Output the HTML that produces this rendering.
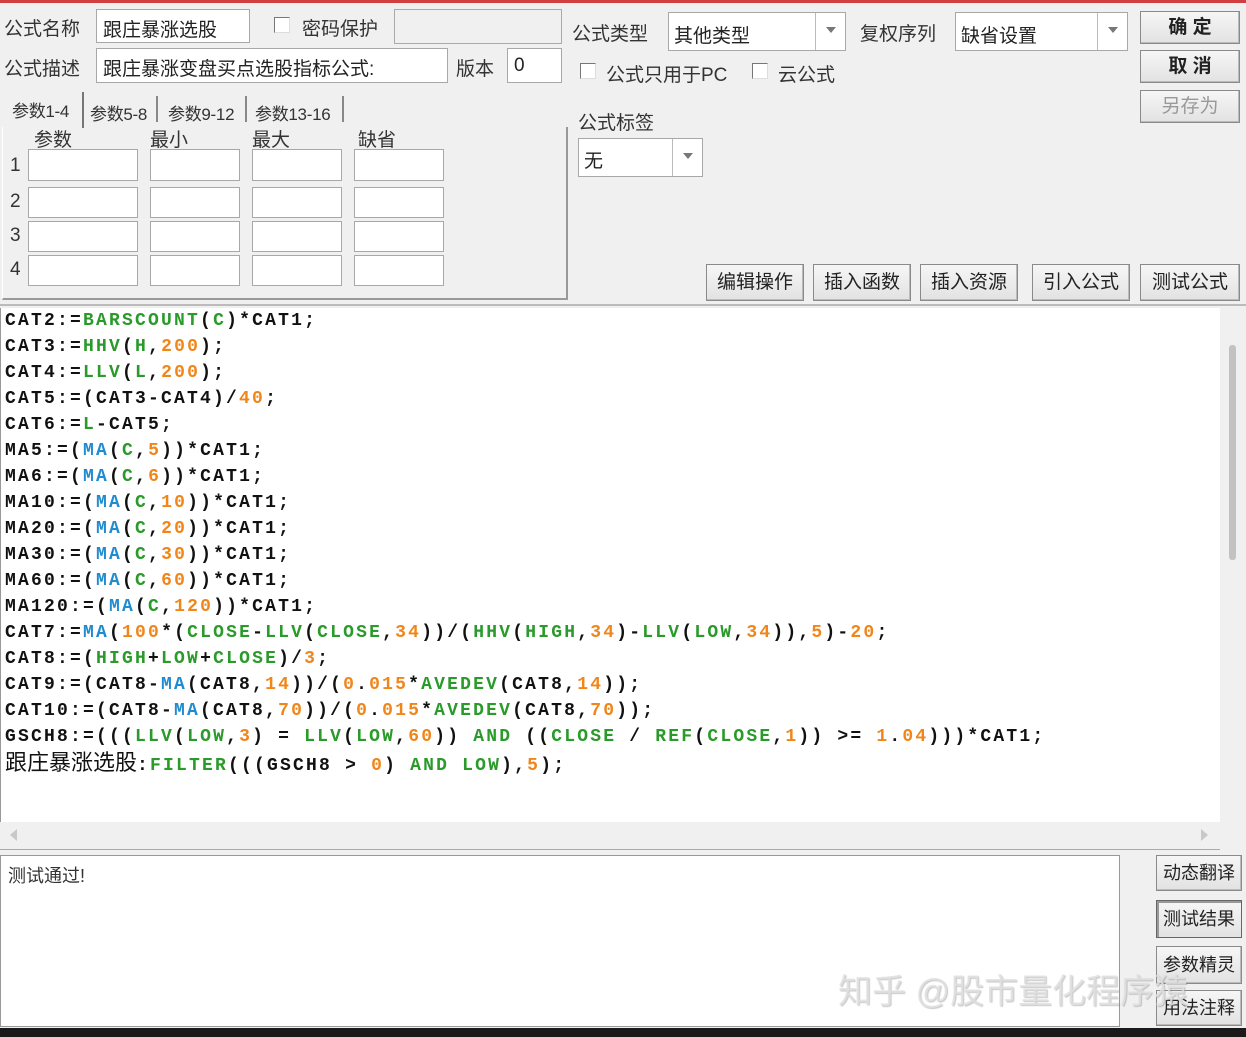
<!DOCTYPE html>
<html><head><meta charset="utf-8"><style>
*{box-sizing:border-box;margin:0;padding:0}
body{width:1246px;height:1037px;background:#f0f0f0;position:relative;overflow:hidden;font-family:"Liberation Sans","Noto Sans CJK SC",sans-serif;font-size:18px;color:#222}
.a{position:absolute}
.box{position:absolute;background:#fff;border:1px solid #a8a8a8}
.lbl{position:absolute;font-size:19px;color:#333;white-space:nowrap}
.tab{position:absolute;font-size:17px;color:#333;white-space:nowrap;letter-spacing:-0.3px}
.btn{position:absolute;background:linear-gradient(#f6f6f6,#e2e2e2);border:1px solid #8a8a8a;box-shadow:inset -1px -1px 0 #bbb;font-size:19px;text-align:center;color:#222;white-space:nowrap}
.cb{position:absolute;width:16px;height:16px;border:1px solid #777;border-right-color:#ddd;border-bottom-color:#ddd;background:#fff}
.dd{position:absolute;right:0;top:0;bottom:0;width:30px;border-left:1px solid #bbb}
.dd:after{content:"";position:absolute;left:10px;top:14px;border:5px solid transparent;border-top:6px solid #777}
.code{position:absolute;left:0;top:308px;width:1220px;height:514px;background:#fff;border-left:1px solid #999}
.ln{position:absolute;left:4px;font-family:"Liberation Mono",monospace;font-weight:bold;font-size:18px;letter-spacing:2.2px;white-space:pre;color:#111;line-height:26px}
.g{color:#2a9a2a}.b{color:#1f8bd0}.o{color:#f0861a}
.cj{font-family:"Liberation Sans","Noto Sans CJK SC",sans-serif;font-weight:normal;font-size:22px;letter-spacing:0}
</style></head><body>
<div class="a" style="left:0;top:0;width:1246px;height:3px;background:#d04040"></div>

<div class="lbl" style="left:4px;top:14px">公式名称</div>
<div class="box" style="left:96px;top:9px;width:154px;height:34px"><span class="a" style="left:6px;top:5px;font-size:19px">跟庄暴涨选股</span></div>
<div class="cb" style="left:274px;top:17px"></div>
<div class="lbl" style="left:302px;top:14px">密码保护</div>
<div class="a" style="left:394px;top:9px;width:168px;height:35px;border:1px solid #aaa;background:#f0f0f0"></div>

<div class="lbl" style="left:4px;top:54px">公式描述</div>
<div class="box" style="left:96px;top:48px;width:352px;height:35px"><span class="a" style="left:6px;top:5px;font-size:19px">跟庄暴涨变盘买点选股指标公式:</span></div>
<div class="lbl" style="left:456px;top:54px">版本</div>
<div class="box" style="left:507px;top:48px;width:55px;height:35px"><span class="a" style="left:6px;top:6px;font-size:19px">0</span></div>

<!-- tabs -->
<div class="tab" style="left:12px;top:97px">参数1-4</div>
<div class="a" style="left:82px;top:92px;width:2px;height:36px;background:#777"></div>
<div class="tab" style="left:90px;top:100px">参数5-8</div>
<div class="a" style="left:156px;top:96px;width:2px;height:26px;background:#888"></div>
<div class="tab" style="left:168px;top:100px">参数9-12</div>
<div class="a" style="left:245px;top:96px;width:2px;height:26px;background:#888"></div>
<div class="tab" style="left:255px;top:100px">参数13-16</div>
<div class="a" style="left:342px;top:96px;width:2px;height:26px;background:#888"></div>
<div class="a" style="left:2px;top:127px;width:566px;height:173px;border-right:2px solid #999;border-bottom:2px solid #999;border-left:1px solid #fff"></div>
<div class="lbl" style="left:34px;top:125px">参数</div>
<div class="lbl" style="left:150px;top:125px">最小</div>
<div class="lbl" style="left:252px;top:125px">最大</div>
<div class="lbl" style="left:358px;top:125px">缺省</div>
<div class="lbl" style="left:10px;top:155px">1</div><div class="lbl" style="left:10px;top:191px">2</div><div class="lbl" style="left:10px;top:225px">3</div><div class="lbl" style="left:10px;top:259px">4</div>
<div class="box" style="left:28px;top:149px;width:110px;height:32px"></div><div class="box" style="left:150px;top:149px;width:90px;height:32px"></div><div class="box" style="left:252px;top:149px;width:90px;height:32px"></div><div class="box" style="left:354px;top:149px;width:90px;height:32px"></div>
<div class="box" style="left:28px;top:187px;width:110px;height:31px"></div><div class="box" style="left:150px;top:187px;width:90px;height:31px"></div><div class="box" style="left:252px;top:187px;width:90px;height:31px"></div><div class="box" style="left:354px;top:187px;width:90px;height:31px"></div>
<div class="box" style="left:28px;top:221px;width:110px;height:31px"></div><div class="box" style="left:150px;top:221px;width:90px;height:31px"></div><div class="box" style="left:252px;top:221px;width:90px;height:31px"></div><div class="box" style="left:354px;top:221px;width:90px;height:31px"></div>
<div class="box" style="left:28px;top:255px;width:110px;height:31px"></div><div class="box" style="left:150px;top:255px;width:90px;height:31px"></div><div class="box" style="left:252px;top:255px;width:90px;height:31px"></div><div class="box" style="left:354px;top:255px;width:90px;height:31px"></div>

<!-- right top -->
<div class="lbl" style="left:572px;top:19px">公式类型</div>
<div class="box" style="left:668px;top:12px;width:178px;height:39px"><span class="a" style="left:5px;top:8px;font-size:19px">其他类型</span><div class="dd"></div></div>
<div class="lbl" style="left:860px;top:19px">复权序列</div>
<div class="box" style="left:955px;top:12px;width:173px;height:39px"><span class="a" style="left:5px;top:8px;font-size:19px">缺省设置</span><div class="dd"></div></div>
<div class="cb" style="left:580px;top:63px"></div>
<div class="lbl" style="left:606px;top:60px">公式只用于PC</div>
<div class="cb" style="left:752px;top:63px"></div>
<div class="lbl" style="left:778px;top:60px">云公式</div>
<div class="lbl" style="left:578px;top:108px">公式标签</div>
<div class="box" style="left:578px;top:138px;width:125px;height:39px"><span class="a" style="left:5px;top:7px;font-size:19px">无</span><div class="dd"></div></div>

<div class="btn" style="left:1140px;top:11px;width:100px;height:33px;line-height:31px;font-weight:bold">确 定</div>
<div class="btn" style="left:1140px;top:50px;width:100px;height:33px;line-height:31px;font-weight:bold">取 消</div>
<div class="btn" style="left:1140px;top:90px;width:100px;height:33px;line-height:31px;color:#999">另存为</div>

<div class="btn" style="left:706px;top:264px;width:98px;height:37px;line-height:35px">编辑操作</div>
<div class="btn" style="left:813px;top:264px;width:98px;height:37px;line-height:35px">插入函数</div>
<div class="btn" style="left:920px;top:264px;width:98px;height:37px;line-height:35px">插入资源</div>
<div class="btn" style="left:1032px;top:264px;width:98px;height:37px;line-height:35px">引入公式</div>
<div class="btn" style="left:1140px;top:264px;width:100px;height:37px;line-height:35px">测试公式</div>

<div class="a" style="left:0;top:304px;width:1246px;height:2px;background:#bbb"></div>

<!-- code -->
<div class="code">
<div class="ln" style="top:0">CAT2:=<span class="g">BARSCOUNT</span>(<span class="g">C</span>)*CAT1;</div>
<div class="ln" style="top:26px">CAT3:=<span class="g">HHV</span>(<span class="g">H</span>,<span class="o">200</span>);</div>
<div class="ln" style="top:52px">CAT4:=<span class="g">LLV</span>(<span class="g">L</span>,<span class="o">200</span>);</div>
<div class="ln" style="top:78px">CAT5:=(CAT3-CAT4)/<span class="o">40</span>;</div>
<div class="ln" style="top:104px">CAT6:=<span class="g">L</span>-CAT5;</div>
<div class="ln" style="top:130px">MA5:=(<span class="b">MA</span>(<span class="g">C</span>,<span class="o">5</span>))*CAT1;</div>
<div class="ln" style="top:156px">MA6:=(<span class="b">MA</span>(<span class="g">C</span>,<span class="o">6</span>))*CAT1;</div>
<div class="ln" style="top:182px">MA10:=(<span class="b">MA</span>(<span class="g">C</span>,<span class="o">10</span>))*CAT1;</div>
<div class="ln" style="top:208px">MA20:=(<span class="b">MA</span>(<span class="g">C</span>,<span class="o">20</span>))*CAT1;</div>
<div class="ln" style="top:234px">MA30:=(<span class="b">MA</span>(<span class="g">C</span>,<span class="o">30</span>))*CAT1;</div>
<div class="ln" style="top:260px">MA60:=(<span class="b">MA</span>(<span class="g">C</span>,<span class="o">60</span>))*CAT1;</div>
<div class="ln" style="top:286px">MA120:=(<span class="b">MA</span>(<span class="g">C</span>,<span class="o">120</span>))*CAT1;</div>
<div class="ln" style="top:312px">CAT7:=<span class="b">MA</span>(<span class="o">100</span>*(<span class="g">CLOSE</span>-<span class="g">LLV</span>(<span class="g">CLOSE</span>,<span class="o">34</span>))/(<span class="g">HHV</span>(<span class="g">HIGH</span>,<span class="o">34</span>)-<span class="g">LLV</span>(<span class="g">LOW</span>,<span class="o">34</span>)),<span class="o">5</span>)-<span class="o">20</span>;</div>
<div class="ln" style="top:338px">CAT8:=(<span class="g">HIGH</span>+<span class="g">LOW</span>+<span class="g">CLOSE</span>)/<span class="o">3</span>;</div>
<div class="ln" style="top:364px">CAT9:=(CAT8-<span class="b">MA</span>(CAT8,<span class="o">14</span>))/(<span class="o">0</span>.<span class="o">015</span>*<span class="g">AVEDEV</span>(CAT8,<span class="o">14</span>));</div>
<div class="ln" style="top:390px">CAT10:=(CAT8-<span class="b">MA</span>(CAT8,<span class="o">70</span>))/(<span class="o">0</span>.<span class="o">015</span>*<span class="g">AVEDEV</span>(CAT8,<span class="o">70</span>));</div>
<div class="ln" style="top:416px">GSCH8:=(((<span class="g">LLV</span>(<span class="g">LOW</span>,<span class="o">3</span>) = <span class="g">LLV</span>(<span class="g">LOW</span>,<span class="o">60</span>)) <span class="g">AND</span> ((<span class="g">CLOSE</span> / <span class="g">REF</span>(<span class="g">CLOSE</span>,<span class="o">1</span>)) &gt;= <span class="o">1</span>.<span class="o">04</span>)))*CAT1;</div>
<div class="ln" style="top:442px"><span class="cj">跟庄暴涨选股</span>:<span class="g">FILTER</span>(((GSCH8 &gt; <span class="o">0</span>) <span class="g">AND</span> <span class="g">LOW</span>),<span class="o">5</span>);</div>
</div>
<!-- v scrollbar -->
<div class="a" style="left:1220px;top:308px;width:26px;height:514px;background:#f0f0f0"></div>
<div class="a" style="left:1229px;top:345px;width:7px;height:215px;background:#c2c2c2;border-radius:3px"></div>
<!-- h scrollbar -->
<div class="a" style="left:0;top:822px;width:1220px;height:28px;background:#f0f0f0;border-bottom:1px solid #aaa"></div>
<div class="a" style="left:10px;top:829px;border:6px solid transparent;border-right:7px solid #c8c8c8;border-left:0"></div>
<div class="a" style="left:1201px;top:829px;border:6px solid transparent;border-left:7px solid #c8c8c8;border-right:0"></div>

<!-- bottom -->
<div class="a" style="left:0;top:855px;width:1120px;height:172px;background:#fff;border:1px solid #999"></div>
<div class="a" style="left:8px;top:862px;font-size:18px;color:#333">测试通过!</div>
<div class="a" style="left:1120px;top:855px;width:30px;height:172px;background:#f0f0f0"></div>
<div class="btn" style="left:1156px;top:855px;width:86px;height:36px;line-height:34px;font-size:18px">动态翻译</div>
<div class="btn" style="left:1156px;top:900px;width:86px;height:38px;line-height:36px;font-size:18px;border-color:#666;box-shadow:inset 2px 2px 0 #999">测试结果</div>
<div class="btn" style="left:1156px;top:946px;width:86px;height:38px;line-height:36px;font-size:18px">参数精灵</div>
<div class="btn" style="left:1156px;top:990px;width:86px;height:36px;line-height:34px;font-size:18px">用法注释</div>
<div class="a" style="left:838px;top:964px;font-size:34px;color:rgba(225,225,225,0.85);white-space:nowrap;text-shadow:1px 1px 1px rgba(120,120,120,0.4)">知乎 @股市量化程序猿</div>
<div class="a" style="left:0;top:1028px;width:1246px;height:9px;background:#1a1a1a"></div>
</body></html>
